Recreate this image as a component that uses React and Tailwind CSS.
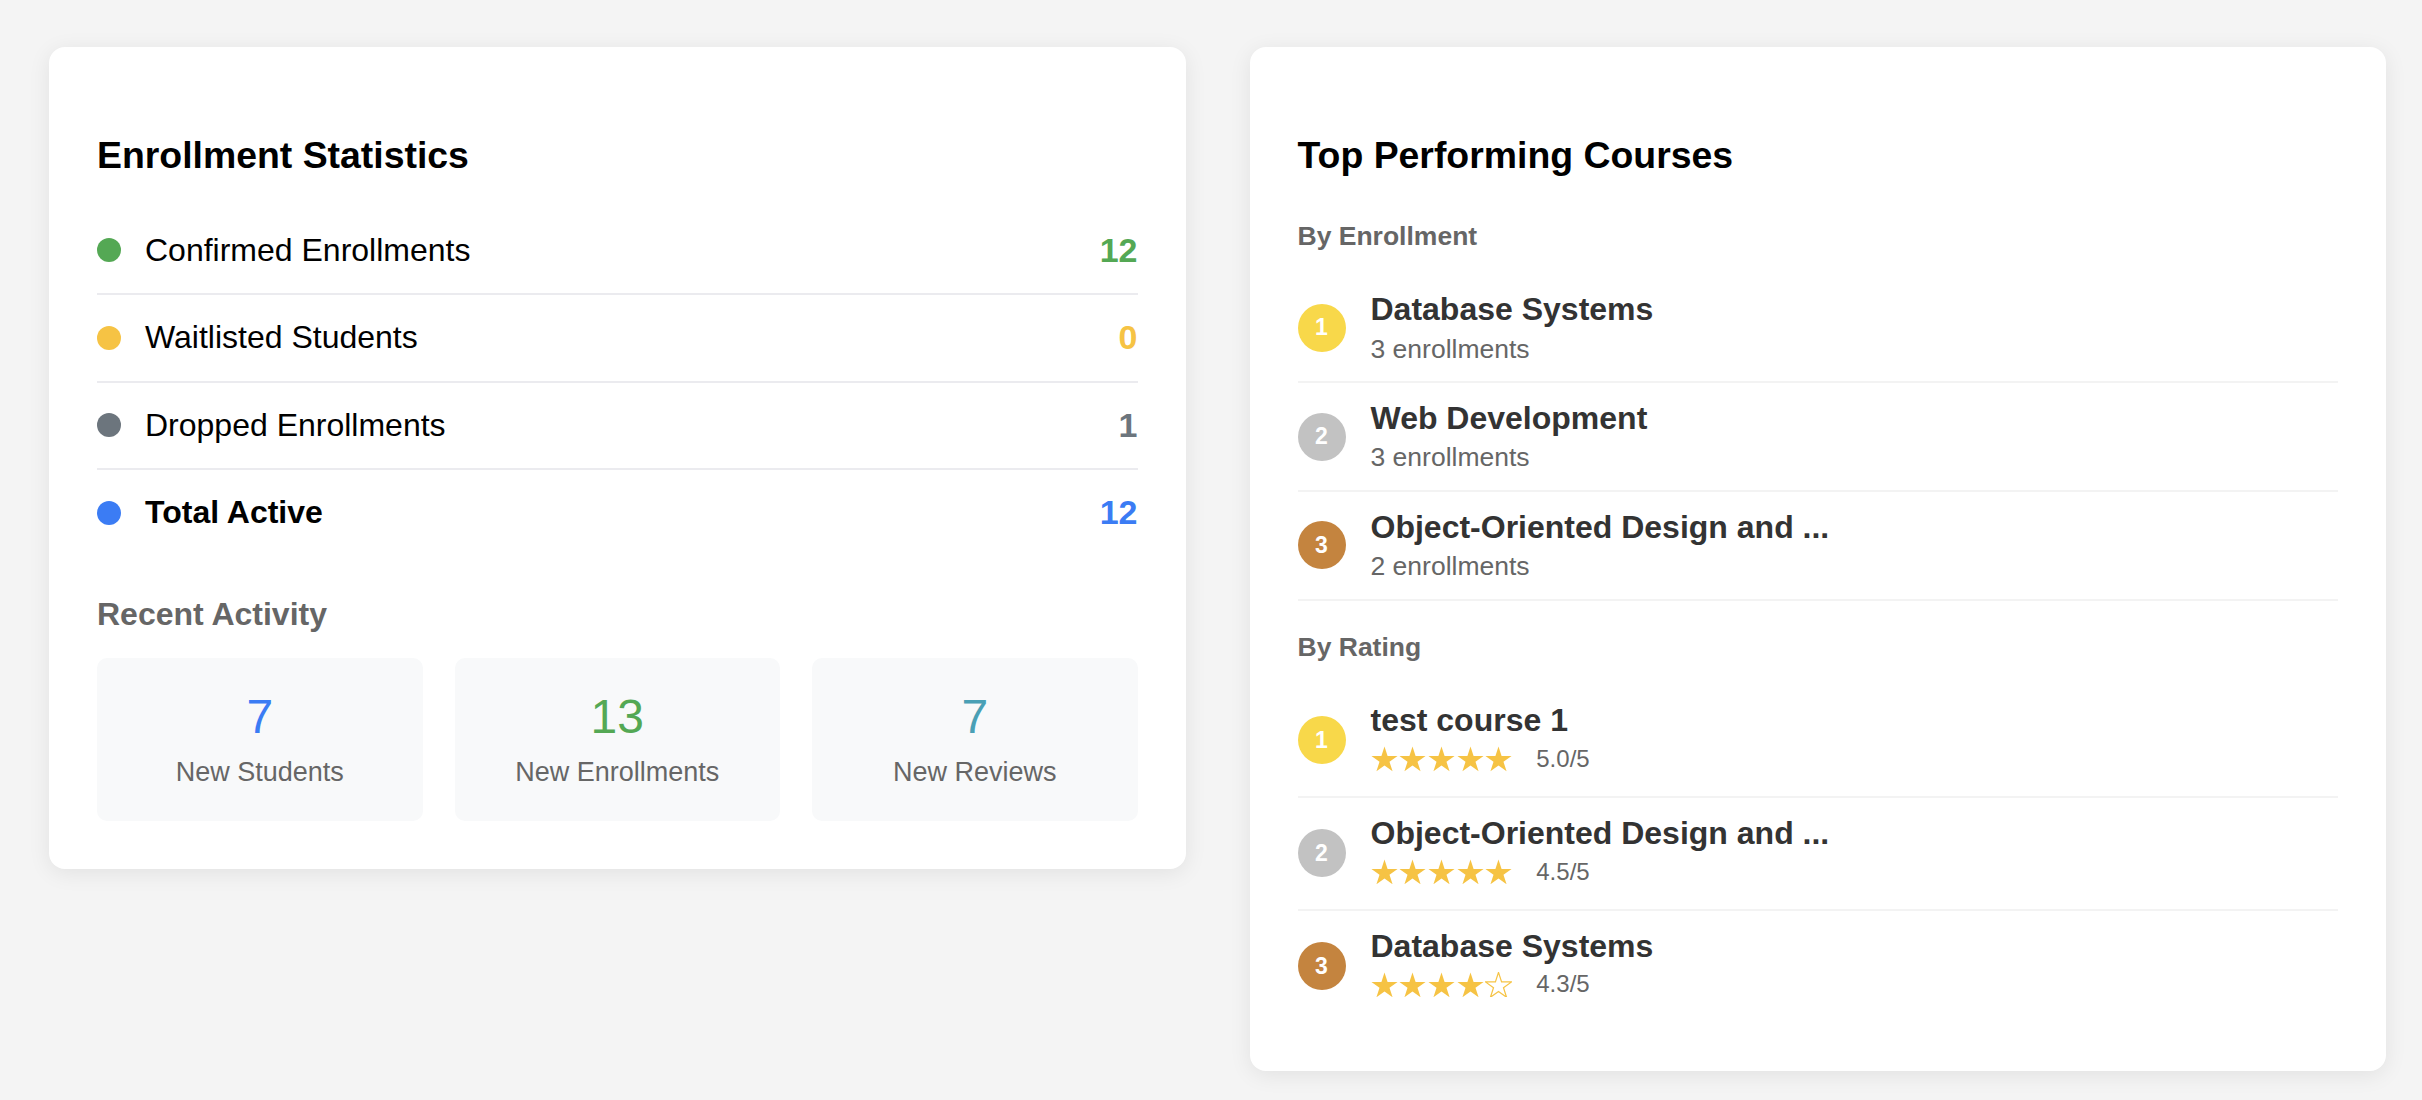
import React from "react";

const stats = [
  { label: "Confirmed Enrollments", value: 12, dot: "bg-[#54a854]", text: "text-[#54a854]" },
  { label: "Waitlisted Students", value: 0, dot: "bg-[#f6c344]", text: "text-[#f6c344]" },
  { label: "Dropped Enrollments", value: 1, dot: "bg-[#6c757d]", text: "text-[#6c757d]" },
  { label: "Total Active", value: 12, dot: "bg-[#3b7cf4]", text: "text-[#3b7cf4]", bold: true },
];

const activity = [
  { value: 7, label: "New Students", color: "text-[#3b7cf4]" },
  { value: 13, label: "New Enrollments", color: "text-[#54a854]" },
  { value: 7, label: "New Reviews", color: "text-[#4aa0b5]" },
];

const badgeColors = ["bg-[#f8d84a]", "bg-[#c2c2c2]", "bg-[#c4843f]"];

const byEnrollment = [
  { name: "Database Systems", count: 3 },
  { name: "Web Development", count: 3 },
  { name: "Object-Oriented Design and ...", count: 2 },
];

const byRating = [
  { name: "test course 1", rating: 5.0, stars: 5 },
  { name: "Object-Oriented Design and ...", rating: 4.5, stars: 5 },
  { name: "Database Systems", rating: 4.3, stars: 4 },
];

// regular five-point star, same shape as the ★ / ☆ glyphs
function Star({ filled }) {
  return (
    <svg width="27" height="25.7" viewBox="2.2 1.7 19.6 18.7" className="block">
      <polygon
        points="12,2 14.245,8.91 21.511,8.91 15.633,13.18 17.878,20.09 12,15.82 6.122,20.09 8.367,13.18 2.489,8.91 9.755,8.91"
        fill={filled ? "#f6c344" : "none"}
        stroke="#f6c344"
        strokeWidth={filled ? 0 : 0.9}
        strokeLinejoin="miter"
      />
    </svg>
  );
}

function Badge({ rank }) {
  return (
    <div
      className={`w-[48px] h-[48px] shrink-0 rounded-full flex items-center justify-center text-white font-bold text-[23px] ${badgeColors[rank]}`}
    >
      {rank + 1}
    </div>
  );
}

export default function App() {
  return (
    <div className="min-h-screen bg-[#f4f4f4] pl-[49px] pr-[36px] pt-[47px] pb-[28px] font-['Liberation_Sans',Arial,sans-serif]">
      <div className="flex items-start gap-[64px]">
        {/* Enrollment statistics */}
        <section className="flex-1 bg-white rounded-[16px] shadow-[0_4px_22px_rgba(0,0,0,0.08)] p-[48px]">
          <h3 className="mt-[38.7px] mb-[31px] text-[37.4px] leading-[43px] font-bold text-black">
            Enrollment Statistics
          </h3>
          <div>
            {stats.map((s, i) => (
              <div
                key={s.label}
                className={`flex items-center justify-between py-[24px] ${
                  i < stats.length - 1 ? "border-b-2 border-[#ebebef]" : ""
                }`}
              >
                <div className="flex items-center gap-[24px]">
                  <span className={`w-[24px] h-[24px] rounded-full ${s.dot}`} />
                  <span className={`text-[32px] leading-[37.4px] text-black ${s.bold ? "font-bold" : ""}`}>
                    {s.label}
                  </span>
                </div>
                <span className={`text-[34px] leading-[37.4px] font-bold ${s.text}`}>{s.value}</span>
              </div>
            ))}
          </div>

          <h4 className="mt-[40.4px] mb-[25.5px] text-[32px] leading-[36.8px] font-bold text-[#666]">
            Recent Activity
          </h4>
          <div className="grid grid-cols-3 gap-[32px]">
            {activity.map((a) => (
              <div key={a.label} className="bg-[#f8f9fa] rounded-[10px] pt-[31px] pb-[33.5px] flex flex-col items-center">
                <div className={`text-[48px] leading-[55.2px] ${a.color}`}>{a.value}</div>
                <div className="mt-[12.6px] text-[27px] leading-[31px] text-[#666]">{a.label}</div>
              </div>
            ))}
          </div>
        </section>

        {/* Top performing courses */}
        <section className="flex-1 bg-white rounded-[16px] shadow-[0_4px_22px_rgba(0,0,0,0.08)] px-[48px] pt-[48px] pb-[50px]">
          <h3 className="mt-[38.7px] text-[37.4px] leading-[43px] font-bold text-black">
            Top Performing Courses
          </h3>

          <h5 className="mt-[44px] mb-[23px] text-[26.5px] leading-[30.5px] font-bold text-[#666]">By Enrollment</h5>
          <div>
            {byEnrollment.map((c, i) => (
              <div key={c.name + i} className="flex items-center gap-[25px] py-[17px] border-b-2 border-[#f3f3f3]">
                <Badge rank={i} />
                <div>
                  <div className="text-[32px] leading-[36.8px] font-bold text-[#333]">{c.name}</div>
                  <div className="mt-[5.6px] text-[26.5px] leading-[30.5px] text-[#666]">{c.count} enrollments</div>
                </div>
              </div>
            ))}
          </div>

          <h5 className="mt-[30.7px] mb-[23px] text-[26.5px] leading-[30.5px] font-bold text-[#666]">By Rating</h5>
          <div>
            {byRating.map((c, i) => (
              <div
                key={c.name + i}
                className={`flex items-center gap-[25px] py-[17px] ${
                  i < byRating.length - 1 ? "border-b-2 border-[#f3f3f3]" : ""
                }`}
              >
                <Badge rank={i} />
                <div>
                  <div className="text-[32px] leading-[36.8px] font-bold text-[#333]">{c.name}</div>
                  <div className="h-[40px] flex items-center">
                    <div className="flex gap-[1.7px]">
                      {[0, 1, 2, 3, 4].map((n) => (
                        <Star key={n} filled={n < c.stars} />
                      ))}
                    </div>
                    <span className="ml-[24px] text-[24px] leading-[28px] text-[#666]">{c.rating.toFixed(1)}/5</span>
                  </div>
                </div>
              </div>
            ))}
          </div>
        </section>
      </div>
    </div>
  );
}
